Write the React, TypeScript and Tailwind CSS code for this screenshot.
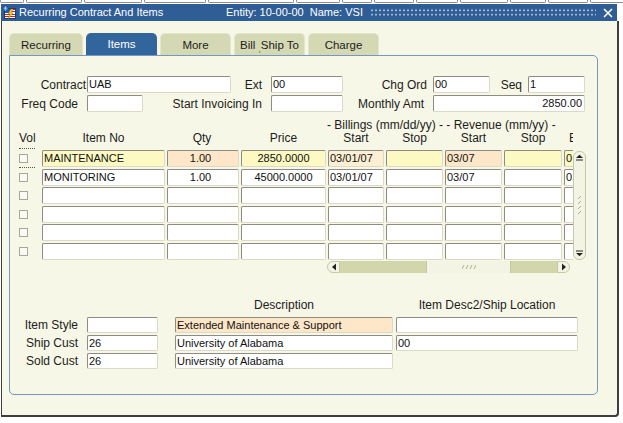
import React from 'react';

// cell look: sunken 3d edge, small radius
const cellBase =
  'h-full flex items-center whitespace-nowrap overflow-hidden border border-t-[#8c8c82] border-l-[#8c8c82] border-b-[#dadac6] border-r-[#dadac6] rounded-[2px] px-[1px] text-[11px] leading-none text-[#111]';

function Cell({ w, value = '', bg = 'bg-white', align = 'justify-start' }: { w: string; value?: string; bg?: string; align?: string }) {
  return <div className={`${cellBase} ${w} ${bg} ${align}`}>{value}</div>;
}

function Label({ w, pr, text }: { w: string; pr: string; text: string }) {
  return <div className={`${w} ${pr} shrink-0 text-right text-[12px] leading-none whitespace-nowrap`}>{text}</div>;
}

function Check() {
  return <div className="w-[9px] h-[9px] border border-[#a6a898] bg-[#fbfbf4]" />;
}

const YEL = 'bg-[#fdf9c2]';
const PEA = 'bg-[#fde7c8]';
const PEA2 = 'bg-[#fcefd3]';

type Row = { item: string; qty: string; price: string; bs: string; rs: string; e: string; active?: boolean };

const rows: Row[] = [
  { item: 'MAINTENANCE', qty: '1.00', price: '2850.0000', bs: '03/01/07', rs: '03/07', e: '0', active: true },
  { item: 'MONITORING', qty: '1.00', price: '45000.0000', bs: '03/01/07', rs: '03/07', e: '0' },
  { item: '', qty: '', price: '', bs: '', rs: '', e: '' },
  { item: '', qty: '', price: '', bs: '', rs: '', e: '' },
  { item: '', qty: '', price: '', bs: '', rs: '', e: '' },
  { item: '', qty: '', price: '', bs: '', rs: '', e: '' },
];

function TitleIcon() {
  return (
    <svg width="15" height="15" viewBox="0 0 15 15">
      <rect x="2.5" y="3.5" width="11" height="10" fill="#fff" stroke="#1b3c78" />
      <rect x="3" y="4" width="5" height="4" fill="#2b55b4" />
      <rect x="8" y="4" width="5" height="1" fill="#d42020" />
      <rect x="8" y="6" width="5" height="1" fill="#d42020" />
      <rect x="3" y="9" width="10" height="1" fill="#d42020" />
      <rect x="3" y="11" width="10" height="1" fill="#d42020" />
      <polygon points="9,4 6,9 8,9 6,14 11,8 9,8 11,4" fill="#f5d21c" stroke="#8a6d00" strokeWidth="0.4" />
      <circle cx="3.5" cy="3.5" r="2.6" fill="#3d8ad4" stroke="#1b3c78" strokeWidth="0.6" />
      <path d="M2 3.2 H5 M3.5 1.2 V5.8" stroke="#bfe0ff" strokeWidth="0.6" />
    </svg>
  );
}

function Grip({ vertical }: { vertical?: boolean }) {
  return (
    <svg width={vertical ? 6 : 14} height={vertical ? 22 : 6} viewBox={vertical ? '0 0 6 22' : '0 0 14 6'}>
      {vertical
        ? [0, 5, 10, 15].map((y) => <path key={y} d={`M1 ${y + 4} L4 ${y + 1}`} stroke="#a4a68c" strokeWidth="0.9" />)
        : [0, 4, 8, 12].map((x) => <path key={x} d={`M${x} 5 L${x + 2} 1`} stroke="#a4a68c" strokeWidth="0.9" />)}
    </svg>
  );
}

export default function App() {
  const strip = [24, 56, 58, 62, 86, 44, 30, 40, 42, 48, 36, 40, 40, 20];
  return (
    <div className="w-[623px] h-[423px] bg-white overflow-hidden font-['Liberation_Sans',Arial,sans-serif] text-[#1c1c1c]">
      {/* leftover toolbar edges */}
      <div className="h-[4px] flex gap-[2px] overflow-hidden">
        {strip.map((w, i) => (
          <div key={i} style={{ width: w }} className="h-[3px] shrink-0 border-b border-x border-[#8e8e8e] rounded-b-[2px] bg-white" />
        ))}
      </div>

      <div className="ml-[1px] w-[618px] h-[413px] flex flex-col">
        {/* title bar */}
        <div className="h-[17px] w-[616px] bg-[#2f5d96] flex items-center text-white text-[11px] leading-none">
          <div className="w-[18px] pl-[1px] flex items-center">
            <TitleIcon />
          </div>
          <div className="w-[207px] whitespace-nowrap">Recurring Contract And Items</div>
          <div className="w-[144px] whitespace-nowrap">Entity: 10-00-00&nbsp; Name: VSI</div>
          <div className="w-[226px] h-[9px] bg-[radial-gradient(circle,#c5d3e6_0.8px,transparent_1.1px)] bg-[length:4px_4.5px]" />
          <div className="ml-[7px] flex items-center">
            <svg width="10" height="10" viewBox="0 0 10 10">
              <path d="M1 1 L9 9 M9 1 L1 9" stroke="#fff" strokeWidth="1.6" />
            </svg>
          </div>
        </div>

        {/* window body */}
        <div className="flex-1 bg-[#f7f7e7] border-l border-r-2 border-b-2 border-[#3e3e3e] rounded-br-[4px] pl-[7px] pt-[12px]">
          {/* tabs */}
          <div className="flex gap-[3px] h-[22px]">
            {[
              ['Recurring', 'w-[74px]'],
              ['Items', 'w-[71px]'],
              ['More', 'w-[71px]'],
              ['Bill', 'w-[71px]'],
              ['Charge', 'w-[71px]'],
            ].map(([t, w]) => (
              <div
                key={t}
                className={`${w} h-full rounded-t-[5px] flex items-center justify-center text-[11.5px] leading-none pt-[2px] ${
                  t === 'Items' ? 'bg-[#33659d] text-white' : 'bg-[#d5d9b3] text-[#1c1c1c] border-t border-x border-[#e4e6cc]'
                }`}
              >
                {t === 'Bill' ? (
                  <span>
                    Bill <span className="text-[8px] relative top-[3px]">,</span>Ship To
                  </span>
                ) : (
                  t
                )}
              </div>
            ))}
          </div>

          {/* panel */}
          <div className="w-[589px] h-[340px] border border-[#7597c2] rounded-[5px] rounded-tl-none">
            {/* header fields */}
            <div className="mt-[20px] h-[17px] flex items-center">
              <Label w="w-[77px]" pr="pr-[1px]" text="Contract" />
              <Cell w="w-[144px]" value="UAB" />
              <Label w="w-[40px]" pr="pr-[9px]" text="Ext" />
              <Cell w="w-[72px]" value="00" />
              <Label w="w-[90px]" pr="pr-[6px]" text="Chg Ord" />
              <Cell w="w-[57px]" value="00" />
              <Label w="w-[38px]" pr="pr-[6px]" text="Seq" />
              <Cell w="w-[57px]" value="1" />
            </div>
            <div className="mt-[2px] h-[17px] flex items-center">
              <Label w="w-[77px]" pr="pr-[9px]" text="Freq Code" />
              <Cell w="w-[56px]" />
              <Label w="w-[128px]" pr="pr-[9px]" text="Start Invoicing In" />
              <Cell w="w-[72px]" />
              <Label w="w-[90px]" pr="pr-[9px]" text="Monthly Amt" />
              <Cell w="w-[152px]" value="2850.00" align="justify-end pr-[2px]" />
            </div>

            {/* table header */}
            <div className="mt-[7px] text-[12px] leading-[13px]">
              <div className="h-[13px] pl-[317px] whitespace-nowrap">- Billings (mm/dd/yy) - - Revenue (mm/yy) -</div>
              <div className="h-[13px] flex gap-[2px] whitespace-nowrap">
                <div className="w-[30px] pl-[9px]">Vol</div>
                <div className="w-[123px] text-center">Item No</div>
                <div className="w-[72px] text-center pr-[2px]">Qty</div>
                <div className="w-[85px] text-center">Price</div>
                <div className="w-[245px] flex gap-[2px] overflow-hidden">
                  <div className="w-[56px] shrink-0 text-center">Start</div>
                  <div className="w-[57px] shrink-0 text-center">Stop</div>
                  <div className="w-[57px] shrink-0 text-center">Start</div>
                  <div className="w-[58px] shrink-0 text-center">Stop</div>
                  <div className="w-[9px] shrink-0 overflow-hidden pl-[5px]">E</div>
                </div>
              </div>
            </div>

            {/* table rows + vertical scrollbar */}
            <div className="mt-[5px] flex">
              <div className="w-[563px] flex flex-col gap-[1.6px]">
                {rows.map((r, i) => (
                  <div key={i} className="h-[17px] flex items-center gap-[2px]">
                    <div className="w-[30px] h-full pl-[9px] flex items-center relative">
                      {r.active && (
                        <>
                          <div className="absolute left-[9px] top-[-2px] w-[16px] border-t border-dotted border-[#555]" />
                          <div className="absolute left-[9px] bottom-[-1px] w-[16px] border-t border-dotted border-[#555]" />
                        </>
                      )}
                      <Check />
                    </div>
                    <Cell w="w-[123px]" value={r.item} bg={r.active ? YEL : 'bg-white'} />
                    <Cell w="w-[72px]" value={r.qty} bg={r.active ? PEA : 'bg-white'} align="justify-center pr-[6px]" />
                    <Cell w="w-[85px]" value={r.price} bg={r.active ? YEL : 'bg-white'} align="justify-center" />
                    <div className="w-[245px] h-full flex gap-[2px] overflow-hidden">
                      <div className="w-[56px] h-full shrink-0">
                        <Cell w="w-full" value={r.bs} bg={r.active ? PEA2 : 'bg-white'} />
                      </div>
                      <div className="w-[57px] h-full shrink-0">
                        <Cell w="w-full" bg={r.active ? YEL : 'bg-white'} />
                      </div>
                      <div className="w-[57px] h-full shrink-0">
                        <Cell w="w-full" value={r.rs} bg={r.active ? PEA : 'bg-white'} />
                      </div>
                      <div className="w-[58px] h-full shrink-0">
                        <Cell w="w-full" bg={r.active ? YEL : 'bg-white'} />
                      </div>
                      <div className="w-[14px] h-full shrink-0">
                        <Cell w="w-full" value={r.e} bg={r.active ? YEL : 'bg-white'} />
                      </div>
                    </div>
                  </div>
                ))}
              </div>
              <div className="w-[13px] h-[109px] mt-[1px] bg-[#f4f4e4] border border-[#c6c9a8] rounded-[6px] flex flex-col items-center justify-between py-[2px]">
                <svg width="9" height="7" viewBox="0 0 9 7">
                  <path d="M1 4 L4.5 0.8 L8 4 Z" fill="#222" />
                  <path d="M1 6 H8" stroke="#222" strokeWidth="1" />
                </svg>
                <Grip vertical />
                <svg width="9" height="7" viewBox="0 0 9 7">
                  <path d="M1 1 H8" stroke="#222" strokeWidth="1" />
                  <path d="M1 3 L4.5 6.2 L8 3 Z" fill="#222" />
                </svg>
              </div>
            </div>

            {/* horizontal scrollbar */}
            <div className="mt-[1px] ml-[317px] w-[243px] h-[12px] flex">
              <div className="w-[13px] h-full bg-[#f4f4e4] border border-[#c6c9a8] rounded-l-[6px] flex items-center justify-center">
                <svg width="6" height="8" viewBox="0 0 6 8">
                  <path d="M5 0.5 L1 4 L5 7.5 Z" fill="#222" />
                </svg>
              </div>
              <div className="flex-1 h-full bg-[#d2d6aa] flex">
                <div className="ml-[86px] w-[85px] h-full bg-[#f4f4e4] border-x border-[#c6c9a8] flex items-center justify-center">
                  <Grip />
                </div>
              </div>
              <div className="w-[13px] h-full bg-[#f4f4e4] border border-[#c6c9a8] rounded-r-[6px] flex items-center justify-center">
                <svg width="6" height="8" viewBox="0 0 6 8">
                  <path d="M1 0.5 L5 4 L1 7.5 Z" fill="#222" />
                </svg>
              </div>
            </div>

            {/* description section */}
            <div className="mt-[26px] h-[12px] flex text-[12px] leading-[12px] whitespace-nowrap">
              <div className="w-[165px]" />
              <div className="w-[218px] text-center">Description</div>
              <div className="w-[3px]" />
              <div className="w-[182px] text-center">Item Desc2/Ship Location</div>
            </div>
            <div className="mt-[6px] flex flex-col gap-[2px]">
              <div className="h-[16px] flex items-center">
                <Label w="w-[77px]" pr="pr-[9px]" text="Item Style" />
                <Cell w="w-[71px]" />
                <div className="w-[17px]" />
                <Cell w="w-[218px]" value="Extended Maintenance & Support" bg={PEA} />
                <div className="w-[3px]" />
                <Cell w="w-[182px]" />
              </div>
              <div className="h-[16px] flex items-center">
                <Label w="w-[77px]" pr="pr-[9px]" text="Ship Cust" />
                <Cell w="w-[71px]" value="26" />
                <div className="w-[17px]" />
                <Cell w="w-[218px]" value="University of Alabama" />
                <div className="w-[3px]" />
                <Cell w="w-[182px]" value="00" />
              </div>
              <div className="h-[16px] flex items-center">
                <Label w="w-[77px]" pr="pr-[9px]" text="Sold Cust" />
                <Cell w="w-[71px]" value="26" />
                <div className="w-[17px]" />
                <Cell w="w-[218px]" value="University of Alabama" />
              </div>
            </div>
          </div>
        </div>
      </div>
    </div>
  );
}
